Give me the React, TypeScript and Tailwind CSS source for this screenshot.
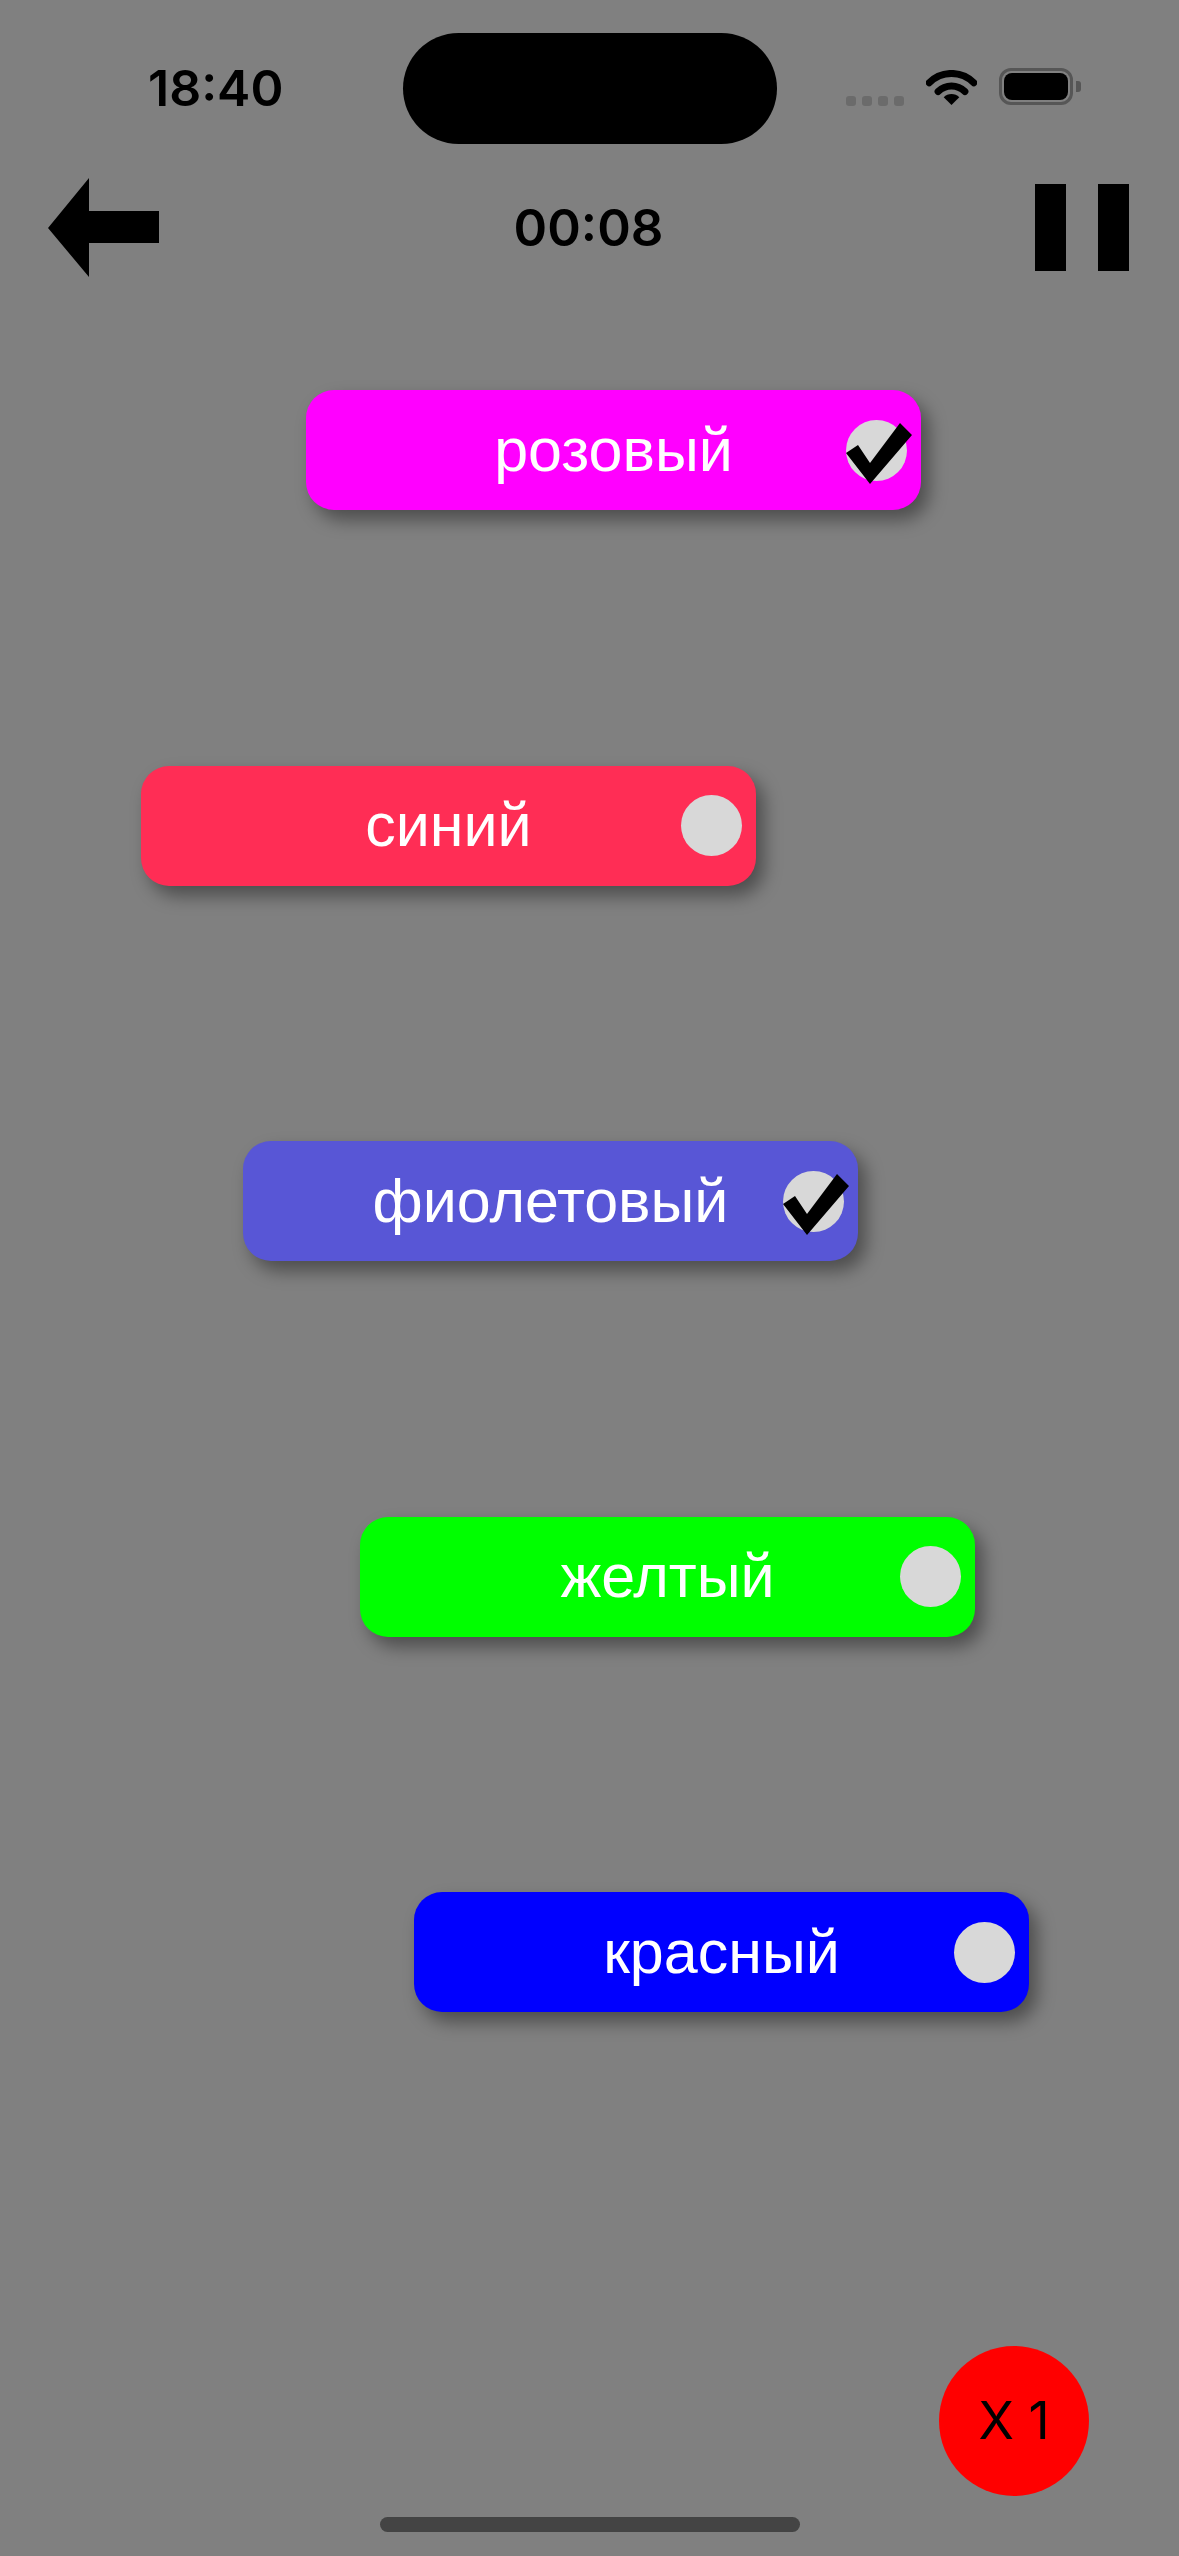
import React from "react";

type Card = { label: string; bg: string; ml: string; checked: boolean };

const cards: Card[] = [
  { label: "розовый", bg: "bg-[#ff00ff]", ml: "ml-[306px]", checked: true },
  { label: "синий", bg: "bg-[#ff2d55]", ml: "ml-[141px]", checked: false },
  { label: "фиолетовый", bg: "bg-[#5856d6]", ml: "ml-[243px]", checked: true },
  { label: "желтый", bg: "bg-[#00ff00]", ml: "ml-[360px]", checked: false },
  { label: "красный", bg: "bg-[#0000ff]", ml: "ml-[414px]", checked: false },
];

function Wifi() {
  return (
    <svg width="51" height="36" viewBox="0 0 51 36" fill="none">
      <path
        d="M3.2 12.7 A31.5 31.5 0 0 1 47.8 12.7"
        stroke="#000"
        strokeWidth="7"
        strokeLinecap="round"
      />
      <path
        d="M12.1 21.6 A19 19 0 0 1 38.9 21.6"
        stroke="#000"
        strokeWidth="7"
        strokeLinecap="round"
      />
      <path d="M25.5 35 L17.7 27.2 A11 11 0 0 1 33.3 27.2 Z" fill="#000" />
    </svg>
  );
}

function Battery() {
  return (
    <div className="flex items-center mb-[3px]">
      <div className="w-[74px] h-[37px] rounded-[12px] border-[3px] border-[#565656] p-[2px]">
        <div className="w-full h-full rounded-[8px] bg-black" />
      </div>
      <div className="ml-[3px] w-[5px] h-[11px] rounded-r-[3px] bg-[#565656]" />
    </div>
  );
}

function Check() {
  return (
    <svg
      className="absolute left-0 top-0 overflow-visible"
      width="66"
      height="64"
      viewBox="0 0 66 64"
    >
      <polygon points="0,33 12,25 24,43 54,3 66,15 24,64" fill="#000" />
    </svg>
  );
}

export default function App() {
  return (
    <div className="relative w-[1179px] h-[2556px] bg-[#808080] overflow-hidden flex flex-col font-[Inter,sans-serif]">
      {/* dynamic island */}
      <div className="absolute left-[403px] top-[33px] w-[374px] h-[111px] rounded-full bg-black" />

      {/* status bar */}
      <div className="mt-[68px] h-[40px] flex items-center justify-between pl-[148px] pr-[98px]">
        <span className="text-[50px] leading-none font-semibold text-black">18:40</span>
        <div className="h-full flex items-center">
          <div className="self-end mb-[2px] flex gap-[6px]">
            <div className="w-[10px] h-[10px] rounded-[3px] bg-[#6b6b6b]" />
            <div className="w-[10px] h-[10px] rounded-[3px] bg-[#6b6b6b]" />
            <div className="w-[10px] h-[10px] rounded-[3px] bg-[#6b6b6b]" />
            <div className="w-[10px] h-[10px] rounded-[3px] bg-[#6b6b6b]" />
          </div>
          <div className="ml-[22px] flex items-center">
            <Wifi />
          </div>
          <div className="ml-[22px]">
            <Battery />
          </div>
        </div>
      </div>

      {/* top bar */}
      <div className="mt-[69px] h-[100px] grid grid-cols-[1fr_auto_1fr] items-center pl-[48px] pr-[50px]">
        <div className="flex items-center">
          <svg width="111" height="99" viewBox="0 0 111 99">
            <polygon points="0,50 41,0 41,33 111,33 111,65 41,65 41,99" fill="#000" />
          </svg>
        </div>
        <span className="text-[51px] leading-none font-semibold text-black">00:08</span>
        <div className="flex justify-end gap-[32px]">
          <div className="w-[31px] h-[87px] bg-black" />
          <div className="w-[31px] h-[87px] bg-black" />
        </div>
      </div>

      {/* cards */}
      <div className="mt-[113px] flex flex-col gap-[255.5px]">
        {cards.map((c) => (
          <div
            key={c.label}
            className={`${c.ml} ${c.bg} w-[615px] h-[120px] rounded-[28px] shadow-[8px_10px_18px_rgba(0,0,0,0.4)] grid grid-cols-[75px_1fr_75px] items-center`}
          >
            <div />
            <span className="text-center text-white text-[61px] leading-none font-['Liberation_Sans',Arial,sans-serif] whitespace-nowrap">
              {c.label}
            </span>
            <div className="flex justify-end pr-[14px]">
              <div className="relative w-[61px] h-[61px] rounded-full bg-[#d8d8d8]">
                {c.checked && <Check />}
              </div>
            </div>
          </div>
        ))}
      </div>

      {/* floating multiplier button */}
      <div className="absolute right-[90px] bottom-[60px] w-[150px] h-[150px] rounded-full bg-[#ff0000] flex items-center justify-center">
        <span className="text-[52px] leading-none text-black">X 1</span>
      </div>

      {/* home indicator */}
      <div className="absolute left-[380px] bottom-[24px] w-[420px] h-[15px] rounded-full bg-[#444444]" />
    </div>
  );
}
